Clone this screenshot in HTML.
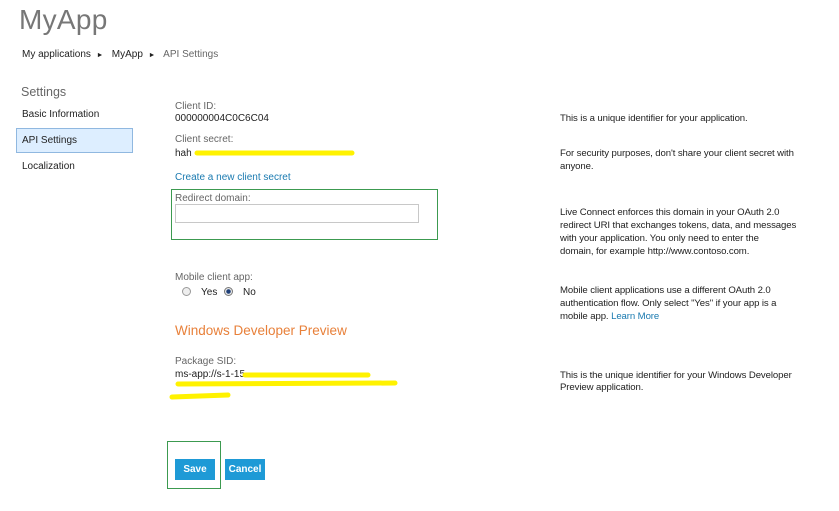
<!DOCTYPE html>
<html><head><meta charset="utf-8"><style>
*{margin:0;padding:0;box-sizing:border-box}
body{width:839px;height:511px;background:#fff;font-family:"Liberation Sans",sans-serif;font-size:10px;color:#222;position:relative;overflow:hidden}
.a{position:absolute;white-space:nowrap}
.g{color:#666}
.l{color:#1a7ab0}
.r{font-size:9.6px;letter-spacing:-0.1px}
</style></head><body>
<div class="a" style="left:19px;top:4px;font-size:28px;color:#777;letter-spacing:0.3px">MyApp</div>
<div class="a" style="left:22px;top:49px">My applications &nbsp;<span style="font-size:7px">►</span>&nbsp;&nbsp; MyApp &nbsp;<span style="font-size:7px">►</span>&nbsp;&nbsp; <span class="g">API Settings</span></div>
<div class="a g" style="left:21px;top:85px;font-size:12.5px">Settings</div>
<div class="a" style="left:22px;top:109px">Basic Information</div>
<div class="a" style="left:16px;top:128px;width:117px;height:25px;background:#ddeeff;border:1px solid #90b8e0"></div>
<div class="a" style="left:22px;top:135px">API Settings</div>
<div class="a" style="left:22px;top:161px">Localization</div>

<div class="a g" style="left:175px;top:101px">Client ID:</div>
<div class="a" style="left:175px;top:113px">000000004C0C6C04</div>
<div class="a g" style="left:175px;top:134px">Client secret:</div>
<div class="a" style="left:175px;top:148px">hah</div>
<div class="a l" style="left:175px;top:172px">Create a new client secret</div>
<div class="a" style="left:171px;top:189px;width:267px;height:51px;border:1px solid #3c9a50"></div>
<div class="a g" style="left:175px;top:193px">Redirect domain:</div>
<div class="a" style="left:175px;top:204px;width:244px;height:19px;border:1px solid #c8c8c8"></div>
<div class="a g" style="left:175px;top:272px">Mobile client app:</div>
<div class="a" style="left:182px;top:287px;width:9px;height:9px;border-radius:50%;border:1px solid #999;background:#eee"></div>
<div class="a" style="left:201px;top:287px">Yes</div>
<div class="a" style="left:224px;top:287px;width:9px;height:9px;border-radius:50%;border:1px solid #777;background:radial-gradient(circle,#1e3f78 2px,#e8e8e8 2.5px)"></div>
<div class="a" style="left:243px;top:287px">No</div>
<div class="a" style="left:175px;top:323px;font-size:13.5px;color:#e8803a">Windows Developer Preview</div>
<div class="a g" style="left:175px;top:356px">Package SID:</div>
<div class="a" style="left:175px;top:369px">ms-app://s-1-15</div>
<svg class="a" style="left:0;top:0" width="839" height="511">
<path d="M197 153 L352 153" stroke="#fff200" stroke-width="5" stroke-linecap="round"/>
<path d="M245 375 L368 375" stroke="#fff200" stroke-width="5" stroke-linecap="round"/>
<path d="M178 384 L395 383" stroke="#fff200" stroke-width="5" stroke-linecap="round"/>
<path d="M172 397 L228 395" stroke="#fff200" stroke-width="5" stroke-linecap="round"/>
</svg>
<div class="a" style="left:167px;top:441px;width:54px;height:48px;border:1px solid #3c9a50"></div>
<div class="a" style="left:175px;top:459px;width:40px;height:21px;background:#1e9ad6;color:#fff;font-weight:bold;text-align:center;line-height:21px">Save</div>
<div class="a" style="left:225px;top:459px;width:40px;height:21px;background:#1e9ad6;color:#fff;font-weight:bold;text-align:center;line-height:21px">Cancel</div>

<div class="a r" style="left:560px;top:113px">This is a unique identifier for your application.</div>
<div class="a r" style="left:560px;top:147px;line-height:13px">For security purposes, don't share your client secret with<br>anyone.</div>
<div class="a r" style="left:560px;top:206px;line-height:13px">Live Connect enforces this domain in your OAuth 2.0<br>redirect URI that exchanges tokens, data, and messages<br>with your application. You only need to enter the<br>domain, for example http://www.contoso.com.</div>
<div class="a r" style="left:560px;top:284px;line-height:13px">Mobile client applications use a different OAuth 2.0<br>authentication flow. Only select "Yes" if your app is a<br>mobile app. <span class="l">Learn More</span></div>
<div class="a r" style="left:560px;top:370px;line-height:12px">This is the unique identifier for your Windows Developer<br>Preview application.</div>
</body></html>
